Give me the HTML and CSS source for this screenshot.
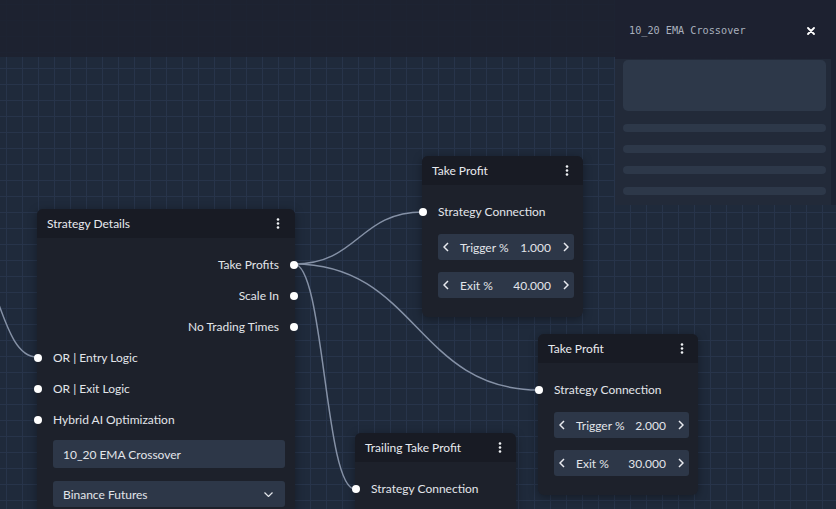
FILE: index.html
```html
<!DOCTYPE html>
<html>
<head>
    <title>Strategy Builder</title>
    <meta name="viewport" content="width=device-width, initial-scale=1">
    <link rel="stylesheet" href="styles.css">
</head>
<body>
    <div class="app">
        <header class="topbar"></header>

        <main class="canvas">
            <svg class="edges" width="836" height="452">
                <path d="M-40,193 C-1.5,193 -1.5,300 37,300"/>
                <path d="M294,207 C358.5,207 358.5,155 423,155"/>
                <path d="M294,207 C416.5,207 416.5,333 539,333"/>
                <path d="M294,207 C324.5,207 324.5,432 355,432"/>
            </svg>

            <!-- strategy details -->
            <div class="node node-details">
                <div class="node-head">
                    <span>Strategy Details</span>
                    <svg class="kebab" width="4" height="11" viewBox="0 0 4 11"><circle cx="2" cy="1.5" r="1.3"/><circle cx="2" cy="5.5" r="1.3"/><circle cx="2" cy="9.5" r="1.3"/></svg>
                </div>
                <div class="node-body">
                    <div class="row out"><span>Take Profits</span><i class="handle"></i></div>
                    <div class="row out"><span>Scale In</span><i class="handle"></i></div>
                    <div class="row out"><span>No Trading Times</span><i class="handle"></i></div>
                    <div class="row in"><i class="handle"></i><span>OR | Entry Logic</span></div>
                    <div class="row in"><i class="handle"></i><span>OR | Exit Logic</span></div>
                    <div class="row in"><i class="handle"></i><span>Hybrid AI Optimization</span></div>
                    <div class="field">10_20 EMA Crossover</div>
                    <div class="field select">
                        <span>Binance Futures</span>
                        <svg width="9" height="5" viewBox="0 0 9 5"><path d="M0.5 0.5L4.5 4.5L8.5 0.5" fill="none" stroke="#e2e5ea" stroke-width="1.2"/></svg>
                    </div>
                </div>
            </div>

            <!-- take profit 1 -->
            <div class="node node-tp1">
                <div class="node-head">
                    <span>Take Profit</span>
                    <svg class="kebab" width="4" height="11" viewBox="0 0 4 11"><circle cx="2" cy="1.5" r="1.3"/><circle cx="2" cy="5.5" r="1.3"/><circle cx="2" cy="9.5" r="1.3"/></svg>
                </div>
                <div class="node-body">
                    <div class="row in"><i class="handle"></i><span>Strategy Connection</span></div>
                    <div class="stepper">
                        <svg class="chev" width="6" height="10" viewBox="0 0 6 10"><path d="M5 1L1 5L5 9"/></svg>
                        <span class="step-label">Trigger %</span>
                        <span class="step-value">1.000</span>
                        <svg class="chev" width="6" height="10" viewBox="0 0 6 10"><path d="M1 1L5 5L1 9"/></svg>
                    </div>
                    <div class="stepper">
                        <svg class="chev" width="6" height="10" viewBox="0 0 6 10"><path d="M5 1L1 5L5 9"/></svg>
                        <span class="step-label">Exit %</span>
                        <span class="step-value">40.000</span>
                        <svg class="chev" width="6" height="10" viewBox="0 0 6 10"><path d="M1 1L5 5L1 9"/></svg>
                    </div>
                </div>
            </div>

            <!-- take profit 2 -->
            <div class="node node-tp2">
                <div class="node-head">
                    <span>Take Profit</span>
                    <svg class="kebab" width="4" height="11" viewBox="0 0 4 11"><circle cx="2" cy="1.5" r="1.3"/><circle cx="2" cy="5.5" r="1.3"/><circle cx="2" cy="9.5" r="1.3"/></svg>
                </div>
                <div class="node-body">
                    <div class="row in"><i class="handle"></i><span>Strategy Connection</span></div>
                    <div class="stepper">
                        <svg class="chev" width="6" height="10" viewBox="0 0 6 10"><path d="M5 1L1 5L5 9"/></svg>
                        <span class="step-label">Trigger %</span>
                        <span class="step-value">2.000</span>
                        <svg class="chev" width="6" height="10" viewBox="0 0 6 10"><path d="M1 1L5 5L1 9"/></svg>
                    </div>
                    <div class="stepper">
                        <svg class="chev" width="6" height="10" viewBox="0 0 6 10"><path d="M5 1L1 5L5 9"/></svg>
                        <span class="step-label">Exit %</span>
                        <span class="step-value">30.000</span>
                        <svg class="chev" width="6" height="10" viewBox="0 0 6 10"><path d="M1 1L5 5L1 9"/></svg>
                    </div>
                </div>
            </div>

            <!-- trailing take profit -->
            <div class="node node-ttp">
                <div class="node-head">
                    <span>Trailing Take Profit</span>
                    <svg class="kebab" width="4" height="11" viewBox="0 0 4 11"><circle cx="2" cy="1.5" r="1.3"/><circle cx="2" cy="5.5" r="1.3"/><circle cx="2" cy="9.5" r="1.3"/></svg>
                </div>
                <div class="node-body">
                    <div class="row in"><i class="handle"></i><span>Strategy Connection</span></div>
                </div>
            </div>
        </main>

        <!-- floating details panel -->
        <aside class="panel">
            <div class="panel-main">
                <div class="panel-head">
                    <span class="panel-title">10_20 EMA Crossover</span>
                    <button class="close" title="Close">
                        <svg width="8" height="8" viewBox="0 0 8 8"><path d="M1 1L7 7M7 1L1 7" stroke="#fff" stroke-width="1.8" stroke-linecap="round"/></svg>
                    </button>
                </div>
                <div class="panel-body">
                    <div class="skeleton-block"></div>
                    <div class="skeleton-line"></div>
                    <div class="skeleton-line"></div>
                    <div class="skeleton-line"></div>
                    <div class="skeleton-line"></div>
                </div>
            </div>
            <div class="scroll-track"></div>
        </aside>
    </div>
</body>
</html>
```

FILE: styles.css
```css
html, body {
    margin: 0;
    padding: 0;
}
body {
    font-family: Lato, "Noto Sans", sans-serif;
    font-size: 12px;
    color: #e2e5ea;
    background: #1f2a3b;
    overflow: hidden;
}
.app {
    position: relative;
    width: 836px;
    height: 509px;
    display: flex;
    flex-direction: column;
    background-color: #1f2a3b;
    background-image:
        linear-gradient(to right, #27344a 1px, transparent 1px),
        linear-gradient(to bottom, #27344a 1px, transparent 1px);
    background-size: 16px 16px;
    background-position: 6px 4px;
}
.topbar {
    height: 57px;
    flex-shrink: 0;
    background: rgba(29, 33, 48, 0.9);
}
.canvas {
    flex: 1;
    position: relative;
    overflow: hidden;
}
.edges {
    position: absolute;
    left: 0;
    top: 0;
    overflow: visible;
}
.edges path {
    fill: none;
    stroke: #8591a6;
    stroke-width: 1.5;
}

/* right panel */
.panel {
    position: absolute;
    top: 0;
    right: 0;
    width: 221px;
    height: 205px;
    display: flex;
}
.panel-main {
    flex: 1;
    display: flex;
    flex-direction: column;
}
.panel-head {
    height: 57px;
    background: rgba(29, 33, 48, 0.96);
    display: flex;
    align-items: center;
    justify-content: space-between;
    padding: 2px 16px 0 14px;
}
.panel-title {
    font-family: "DejaVu Sans Mono", monospace;
    font-size: 10.2px;
    color: #a9b0bd;
}
.close {
    background: none;
    border: none;
    padding: 0;
    display: flex;
    cursor: pointer;
}
.panel-body {
    flex: 1;
    background: #222a39;
    padding: 1px 5px 0 8px;
}
.scroll-track {
    width: 5px;
    background: #1c2231;
}
.skeleton-block {
    height: 51px;
    background: #2d3849;
    border-radius: 5px;
}
.skeleton-line {
    height: 8px;
    margin-top: 13px;
    background: #2d3849;
    border-radius: 4px;
}

/* nodes */
.node {
    position: absolute;
    background: #1d212b;
    border-radius: 6px;
    box-shadow: 0 2px 10px rgba(0,0,0,0.35);
}
.node-details { left: 37px; top: 152px; width: 258px; }
.node-tp1 { left: 422px; top: 99px; width: 161px; }
.node-tp2 { left: 538px; top: 277px; width: 160px; }
.node-ttp { left: 355px; top: 376px; width: 161px; }

.node-head {
    height: 29px;
    display: flex;
    align-items: center;
    justify-content: space-between;
    padding: 0 14px 0 10px;
    background: #181b24;
    border-radius: 6px 6px 0 0;
    color: #e8eaef;
}
.node-details .node-head {
    padding-right: 15px;
}
.kebab {
    fill: #f0f2f5;
}
.node-body {
    padding: 11px 9px 19px 16px;
    display: flex;
    flex-direction: column;
}
.node-details .node-body {
    padding-right: 10px;
}
.row {
    height: 31px;
    display: flex;
    align-items: center;
    position: relative;
}
.row.out {
    justify-content: flex-end;
    padding-right: 6px;
}
.handle {
    position: absolute;
    width: 8px;
    height: 8px;
    border-radius: 50%;
    background: #fff;
    top: 11.5px;
}
.row.in .handle {
    left: -19px;
}
.row.out .handle {
    right: -13px;
}
.field {
    height: 28px;
    margin-top: 5px;
    background: #2d3748;
    border-radius: 3px;
    padding: 0 12px 0 10px;
    display: flex;
    align-items: center;
    justify-content: space-between;
}
.field.select {
    height: 26px;
    margin-top: 13px;
}
.stepper {
    height: 26px;
    margin-top: 12px;
    background: #2d3748;
    border-radius: 3px;
    padding: 0 5px;
    display: flex;
    align-items: center;
}
.row + .stepper {
    margin-top: 7px;
}
.chev {
    fill: none;
    stroke: #e8eaef;
    stroke-width: 1.5;
}
.step-label {
    margin-left: 11px;
}
.step-value {
    margin-left: auto;
    margin-right: 12px;
}
```
